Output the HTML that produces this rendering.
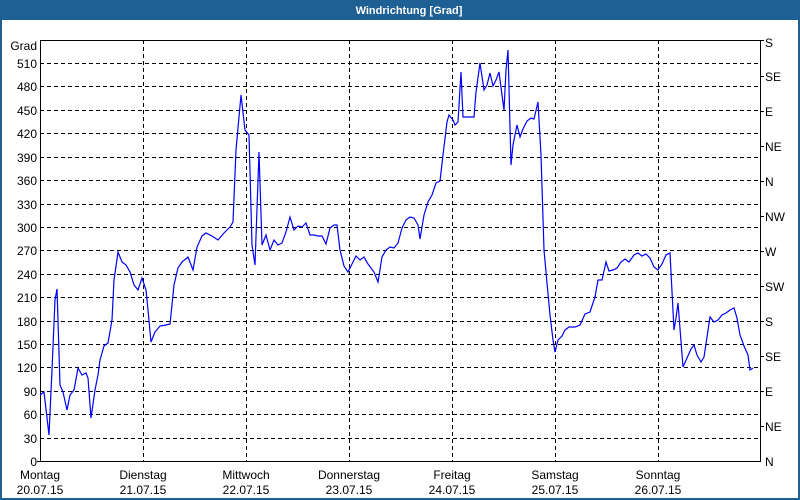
<!DOCTYPE html>
<html><head><meta charset="utf-8"><style>
html,body{margin:0;padding:0;}
body{width:800px;height:500px;overflow:hidden;background:#1e5f94;font-family:"Liberation Sans",sans-serif;}
</style></head><body>
<svg width="800" height="500" xmlns="http://www.w3.org/2000/svg" style="display:block" font-family="Liberation Sans, sans-serif">
<rect x="0" y="0" width="800" height="500" fill="#1e5f94"/>
<rect x="2" y="20" width="796" height="478" fill="#fff"/>
<text x="409" y="14" fill="#fff" font-size="11" font-weight="bold" text-anchor="middle">Windrichtung [Grad]</text>
<g stroke="#000" stroke-width="1" stroke-dasharray="4,3" shape-rendering="crispEdges">
<line x1="40" x2="760" y1="63.5" y2="63.5"/><line x1="40" x2="760" y1="86.5" y2="86.5"/><line x1="40" x2="760" y1="110.5" y2="110.5"/><line x1="40" x2="760" y1="133.5" y2="133.5"/><line x1="40" x2="760" y1="157.5" y2="157.5"/><line x1="40" x2="760" y1="180.5" y2="180.5"/><line x1="40" x2="760" y1="204.5" y2="204.5"/><line x1="40" x2="760" y1="227.5" y2="227.5"/><line x1="40" x2="760" y1="250.5" y2="250.5"/><line x1="40" x2="760" y1="274.5" y2="274.5"/><line x1="40" x2="760" y1="297.5" y2="297.5"/><line x1="40" x2="760" y1="321.5" y2="321.5"/><line x1="40" x2="760" y1="344.5" y2="344.5"/><line x1="40" x2="760" y1="367.5" y2="367.5"/><line x1="40" x2="760" y1="391.5" y2="391.5"/><line x1="40" x2="760" y1="414.5" y2="414.5"/><line x1="40" x2="760" y1="438.5" y2="438.5"/>
<line x1="143.5" x2="143.5" y1="40" y2="461"/><line x1="246.5" x2="246.5" y1="40" y2="461"/><line x1="349.5" x2="349.5" y1="40" y2="461"/><line x1="452.5" x2="452.5" y1="40" y2="461"/><line x1="555.5" x2="555.5" y1="40" y2="461"/><line x1="658.5" x2="658.5" y1="40" y2="461"/>
</g>
<g stroke="#000" stroke-width="1" fill="none" shape-rendering="crispEdges">
<polyline points="40.5,461 40.5,40.5 760.5,40.5 760.5,461"/>
<line x1="37" x2="761" y1="461.5" y2="461.5"/>
<line x1="760" x2="764" y1="76.5" y2="76.5"/><line x1="760" x2="764" y1="111.5" y2="111.5"/><line x1="760" x2="764" y1="146.5" y2="146.5"/><line x1="760" x2="764" y1="181.5" y2="181.5"/><line x1="760" x2="764" y1="216.5" y2="216.5"/><line x1="760" x2="764" y1="251.5" y2="251.5"/><line x1="760" x2="764" y1="286.5" y2="286.5"/><line x1="760" x2="764" y1="321.5" y2="321.5"/><line x1="760" x2="764" y1="356.5" y2="356.5"/><line x1="760" x2="764" y1="391.5" y2="391.5"/><line x1="760" x2="764" y1="426.5" y2="426.5"/><line x1="760" x2="764" y1="40.5" y2="40.5"/>
</g>
<g font-size="12" fill="#000" text-anchor="end">
<text x="37" y="50">Grad</text>
<text x="37" y="68">510</text><text x="37" y="91">480</text><text x="37" y="115">450</text><text x="37" y="138">420</text><text x="37" y="162">390</text><text x="37" y="185">360</text><text x="37" y="209">330</text><text x="37" y="232">300</text><text x="37" y="255">270</text><text x="37" y="279">240</text><text x="37" y="302">210</text><text x="37" y="326">180</text><text x="37" y="349">150</text><text x="37" y="372">120</text><text x="37" y="396">90</text><text x="37" y="419">60</text><text x="37" y="443">30</text><text x="37" y="466">0</text>
</g>
<g font-size="12" fill="#000">
<text x="765" y="47">S</text><text x="765" y="81">SE</text><text x="765" y="116">E</text><text x="765" y="151">NE</text><text x="765" y="186">N</text><text x="765" y="221">NW</text><text x="765" y="256">W</text><text x="765" y="291">SW</text><text x="765" y="326">S</text><text x="765" y="361">SE</text><text x="765" y="396">E</text><text x="765" y="431">NE</text><text x="765" y="466">N</text>
</g>
<g font-size="12" fill="#000" text-anchor="middle">
<text x="40" y="479">Montag</text><text x="40" y="494">20.07.15</text>
<text x="143" y="479">Dienstag</text><text x="143" y="494">21.07.15</text>
<text x="246" y="479">Mittwoch</text><text x="246" y="494">22.07.15</text>
<text x="349" y="479">Donnerstag</text><text x="349" y="494">23.07.15</text>
<text x="452" y="479">Freitag</text><text x="452" y="494">24.07.15</text>
<text x="555" y="479">Samstag</text><text x="555" y="494">25.07.15</text>
<text x="658" y="479">Sonntag</text><text x="658" y="494">26.07.15</text>
</g>
<polyline fill="none" stroke="#0000ff" stroke-width="1.2" points="40,395 44,392 49,435 52,370 55,300 57,289 60,385 63,392 67,410 70,395 74,390 78,368 82,375 86,373 88,378 91,418 95,390 98,375 100,360 104,346 108,343 112,320 114,280 118,252 122,262 126,265 130,272 134,285 138,290 142,278 146,290 148,310 151,342 155,332 160,326 166,325 170,324 174,285 178,268 182,262 188,257 193,270 197,247 202,236 206,233 212,236 218,240 224,233 230,227 233,222 236,150 241,95 245,130 249,135 252,245 255,265 259,152 262,245 266,235 270,250 274,240 278,245 282,243 286,232 290,217 294,230 298,226 302,227 306,223 310,235 314,235 318,236 322,236 326,244 330,228 334,225 337,225 340,250 344,266 348,272 352,264 356,256 360,260 364,257 368,264 374,272 378,282 382,257 386,250 390,247 394,248 398,243 402,228 406,220 410,217 414,218 418,225 420,239 424,215 428,202 432,195 436,183 440,181 443,155 447,122 449,115 453,120 455,125 458,122 461,72 463,117 468,117 474,117 476,92 480,63 484,90 487,85 490,73 493,86 496,80 499,72 502,95 504,110 506,70 508,50 511,165 513,145 517,125 520,137 523,129 527,121 531,118 534,119 538,102 541,155 544,250 547,283 550,315 553,340 555,352 558,340 562,336 565,330 569,327 575,327 580,325 585,314 590,312 595,297 598,280 602,280 606,262 609,271 613,270 617,268 621,262 625,259 629,262 634,255 638,253 642,256 646,254 650,258 654,267 658,270 662,264 666,255 670,253 674,330 676,318 678,303 683,367 687,358 691,349 694,345 697,355 701,362 704,357 707,337 710,317 714,322 718,320 722,315 726,313 730,310 734,308 737,318 740,335 744,346 748,355 750,370 753,368"/>
</svg>
</body></html>
